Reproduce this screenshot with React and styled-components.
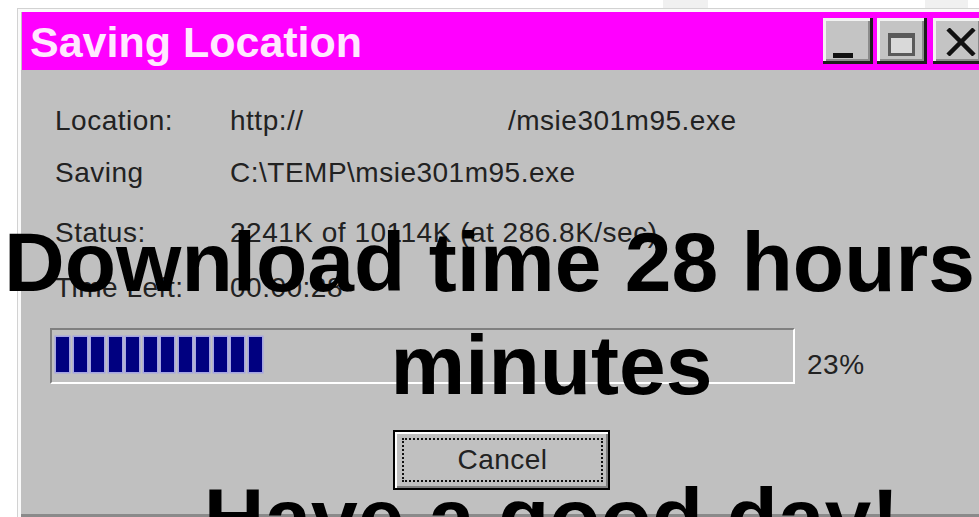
import React from "react";
import styled, { createGlobalStyle } from "styled-components";

const GlobalStyle = createGlobalStyle`
  html, body {
    margin: 0;
    padding: 0;
    background: #ffffff;
    overflow: hidden;
  }
  body {
    font-family: "Liberation Sans", Arial, sans-serif;
  }
`;

const Page = styled.div`
  position: relative;
  width: 979px;
  height: 517px;
  overflow: hidden;
  background: #ffffff;
`;

const Strip = styled.div`
  display: flex;
  height: 8px;
`;

const Smudge = styled.div`
  width: ${({ w }) => w}px;
  margin-left: ${({ offset }) => offset}px;
  background: #f0f0f0;
`;

const Window = styled.div`
  box-sizing: border-box;
  margin-left: 17px;
  width: 975px;
  height: 509px;
  padding: 4px 5px 0 5px;
  background: #c0c0c0;
  box-shadow: inset 1px 1px 0 #d2d2d2, inset 4px 4px 0 #fafafa,
    inset 0 -3px 0 #8a8a8a;
`;

const TitleBar = styled.div`
  display: flex;
  align-items: center;
  justify-content: space-between;
  height: 58px;
  padding: 0 4px 0 8px;
  background: #ff00ff;
`;

const Title = styled.div`
  padding-top: 2px;
  font-size: 43px;
  font-weight: 700;
  line-height: 1;
  color: #ffe8ff;
`;

const Controls = styled.div`
  display: flex;
`;

const CapButton = styled.div`
  box-sizing: border-box;
  display: flex;
  align-items: ${({ glyph }) => (glyph === "min" ? "flex-end" : "center")};
  justify-content: ${({ glyph }) => (glyph === "min" ? "flex-start" : "center")};
  width: 50px;
  height: 46px;
  margin-left: ${({ gap }) => gap || 0}px;
  padding: ${({ glyph }) =>
    glyph === "min" ? "0 0 6px 10px" : glyph === "max" ? "6px 2px 0 0" : "2px 0 0 5px"};
  background: #c4c4c4;
  box-shadow: inset -3px -3px 0 #1e1e1e, inset 3px 3px 0 #f2f2f2,
    inset -5px -5px 0 #8c8c8c;
`;

const MinGlyph = styled.span`
  width: 20px;
  height: 5px;
  background: #111;
`;

const MaxGlyph = styled.span`
  box-sizing: border-box;
  width: 27px;
  height: 23px;
  border: 3px solid #5a5a5a;
  border-top-width: 5px;
  background: #d9d9d9;
`;

const Content = styled.div`
  padding: 35px 0 0 28px;
`;

const Fields = styled.div`
  padding-left: 5px;
`;

const Row = styled.div`
  display: flex;
  height: 32px;
  margin-top: ${({ gap }) => gap || 0}px;
  font-size: 28px;
  line-height: 32px;
  letter-spacing: 0.5px;
  color: #222;
  white-space: nowrap;
`;

const Label = styled.span`
  width: 175px;
`;

const Host = styled.span`
  width: 278px;
`;

const ProgressRow = styled.div`
  display: flex;
  align-items: flex-start;
  margin-top: 24px;
`;

const ProgressBox = styled.div`
  box-sizing: border-box;
  display: flex;
  gap: 4.5px;
  width: 745px;
  height: 56px;
  padding: 7px 4px;
  border: 2px solid;
  border-color: #808080 #ffffff #ffffff #808080;
`;

const Block = styled.span`
  width: 13px;
  height: 35px;
  background: #000080;
  box-shadow: 0 0 0 1.5px rgba(140, 140, 255, 0.55);
`;

const Percent = styled.span`
  margin: 21px 0 0 12px;
  font-size: 28px;
  line-height: 32px;
  letter-spacing: 0.5px;
  color: #222;
`;

const ButtonRow = styled.div`
  display: flex;
  margin-top: 46px;
  padding-left: 343px;
`;

const CancelButton = styled.div`
  box-sizing: border-box;
  display: flex;
  width: 217px;
  height: 60px;
  padding: 6px 5px 6px 7px;
  border: 2px solid #000;
  background: #c0c0c0;
  box-shadow: inset 2px 2px 0 #ffffff, inset -2px -2px 0 #808080;
`;

const Focus = styled.span`
  flex: 1;
  display: flex;
  align-items: center;
  justify-content: center;
  border: 2px dotted #111;
  font-size: 28px;
  letter-spacing: 0.5px;
  color: #222;
`;

const Caption = styled.div`
  position: absolute;
  top: 0;
  left: 0;
  width: 979px;
  padding-top: 211px;
  font-family: "Liberation Sans", Arial, sans-serif;
  font-size: 84px;
  font-weight: 700;
  line-height: 103px;
  color: #000;
  pointer-events: none;
`;

const CaptionLine = styled.div`
  margin-top: ${({ gap }) => gap || 0}px;
  padding-left: ${({ shift }) => shift || 0}px;
  text-align: center;
  white-space: nowrap;
`;

const CloseIcon = () => (
  <svg width="30" height="28" viewBox="0 0 30 28">
    <path d="M2 1 L28 27 M28 1 L2 27" stroke="#111" strokeWidth="4.5" fill="none" />
  </svg>
);

const blocks = Array.from({ length: 12 });

const App = () => (
  <Page>
    <GlobalStyle />
    <Strip>
      <Smudge w={45} offset={663} />
      <Smudge w={43} offset={217} />
    </Strip>
    <Window>
      <TitleBar>
        <Title>Saving Location</Title>
        <Controls>
          <CapButton glyph="min">
            <MinGlyph />
          </CapButton>
          <CapButton glyph="max" gap={4}>
            <MaxGlyph />
          </CapButton>
          <CapButton glyph="close" gap={6}>
            <CloseIcon />
          </CapButton>
        </Controls>
      </TitleBar>
      <Content>
        <Fields>
          <Row>
            <Label>Location:</Label>
            <Host>http://</Host>
            <span>/msie301m95.exe</span>
          </Row>
          <Row gap={20}>
            <Label>Saving</Label>
            <span>C:\TEMP\msie301m95.exe</span>
          </Row>
          <Row gap={28}>
            <Label>Status:</Label>
            <span>2241K of 10114K (at 286.8K/sec)</span>
          </Row>
          <Row gap={23}>
            <Label>Time Left:</Label>
            <span>00:00:28</span>
          </Row>
        </Fields>
        <ProgressRow>
          <ProgressBox>
            {blocks.map((_, i) => (
              <Block key={i} />
            ))}
          </ProgressBox>
          <Percent>23%</Percent>
        </ProgressRow>
        <ButtonRow>
          <CancelButton>
            <Focus>Cancel</Focus>
          </CancelButton>
        </ButtonRow>
      </Content>
    </Window>
    <Caption>
      <CaptionLine>Download time 28 hours</CaptionLine>
      <CaptionLine shift={124}>minutes</CaptionLine>
      <CaptionLine shift={124} gap={50}>
        Have a good day!
      </CaptionLine>
    </Caption>
  </Page>
);

export default App;
